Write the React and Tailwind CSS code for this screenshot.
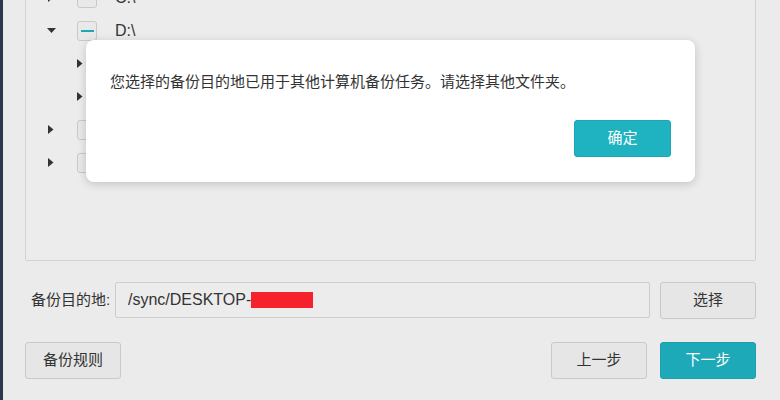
import React from "react";

const cjk = { fontFamily: '"Liberation Sans", "Noto Sans CJK SC", sans-serif' };

function Arrow({ down }) {
    return down ? (
        <svg width="9" height="6" viewBox="0 0 9 6">
            <path d="M0 0 L9 0 L4.5 5 Z" fill="#333" />
        </svg>
    ) : (
        <svg width="6" height="9" viewBox="0 0 6 9">
            <path d="M0 0 L5.5 4.5 L0 9 Z" fill="#333" />
        </svg>
    );
}

function Check({ partial }) {
    return (
        <div className="w-[20px] h-[20px] rounded-[3px] border border-[#c9c9c9] bg-[#e9e9e9] flex items-center justify-center">
            {partial && <div className="w-[13px] h-[2px] bg-[#1ba9b8]" />}
        </div>
    );
}

function TreeRow({ level, open, partial, label }) {
    return (
        <div className={"h-[33px] flex items-center " + (level ? "pl-[49px]" : "pl-[20px]")}>
            <div className="w-[10px] flex justify-center">
                <Arrow down={open} />
            </div>
            <div className="ml-[21px]">
                <Check partial={partial} />
            </div>
            {label && <span className="ml-[18px] text-[16px] text-[#333]">{label}</span>}
        </div>
    );
}

function Btn({ children, primary, className = "" }) {
    return (
        <button
            className={
                "h-[37px] w-[96px] rounded-[3px] text-[15px] " +
                (primary
                    ? "bg-[#1ea9b8] border border-[#1a9fae] text-white "
                    : "bg-[#e6e6e6] border border-[#c9c9c9] text-[#333] ") +
                className
            }
        >
            {children}
        </button>
    );
}

export default function App() {
    return (
        <div className="w-[780px] h-[400px] overflow-hidden flex bg-[#ebebeb] relative" style={cjk}>
            <div className="w-[3px] bg-[#2b3a4b]" />
            <div className="flex-1 pl-[22px] pr-[24px] flex flex-col">
                <div className="mt-[-20px] h-[281px] border border-[#d2d2d2] bg-[#ececec] rounded-[2px]">
                    <TreeRow level={0} label="C:\" />
                    <TreeRow level={0} open partial label="D:\" />
                    <TreeRow level={1} />
                    <TreeRow level={1} />
                    <TreeRow level={0} />
                    <TreeRow level={0} />
                </div>

                <div className="mt-[21px] flex items-center h-[36px]">
                    <span className="w-[90px] pl-[6px] text-[15px] text-[#333]">备份目的地:</span>
                    <div className="flex-1 h-[36px] border border-[#cdcdcd] bg-[#ececec] rounded-[2px] flex items-center pl-[12px] text-[16px] text-[#333]">
                        /sync/DESKTOP-
                        <span className="inline-block w-[62px] h-[16px] bg-[#f5222d]" />
                    </div>
                    <Btn className="ml-[10px]">选择</Btn>
                </div>

                <div className="mt-[24px] flex items-center">
                    <Btn>备份规则</Btn>
                    <div className="flex-1" />
                    <Btn>上一步</Btn>
                    <Btn primary className="ml-[13px]">下一步</Btn>
                </div>
            </div>

            <div className="absolute left-[86px] top-[40px] w-[609px] h-[142px] bg-white rounded-[8px] shadow-[0_2px_10px_rgba(0,0,0,0.18)] flex flex-col pl-[24px] pr-[24px] pt-[31px] pb-[25px]">
                <p className="text-[15px] leading-[22px] text-[#333]">
                    您选择的备份目的地已用于其他计算机备份任务。请选择其他文件夹。
                </p>
                <div className="mt-auto flex justify-end">
                    <button className="h-[37px] w-[97px] rounded-[3px] bg-[#1fb3c2] border border-[#1aa6b5] text-white text-[15px]">
                        确定
                    </button>
                </div>
            </div>
        </div>
    );
}
